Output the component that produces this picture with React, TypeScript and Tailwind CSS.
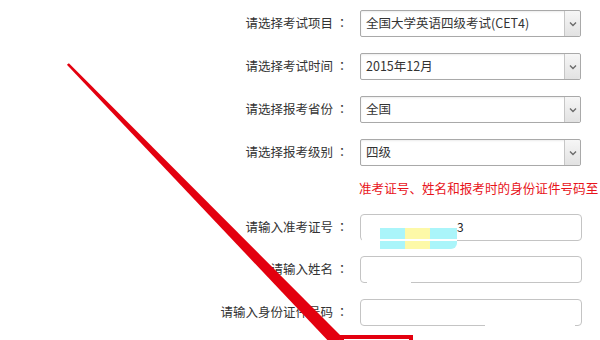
import type { ReactNode } from "react";

const selects = [
  { label: "请选择考试项目", value: "全国大学英语四级考试(CET4)" },
  { label: "请选择考试时间", value: "2015年12月" },
  { label: "请选择报考省份", value: "全国" },
  { label: "请选择报考级别", value: "四级" },
];

function Label({ children }: { children: ReactNode }) {
  return (
    <span className="flex w-[351px] shrink-0 items-center justify-end whitespace-nowrap">
      {children}
      <span className="w-[18px] text-center font-['Noto_Sans_CJK_TC',sans-serif]">
        ：
      </span>
    </span>
  );
}

function Chevron() {
  return (
    <svg width="8" height="6" viewBox="0 0 8 6" className="text-[#6b6b6b]">
      <path
        d="M1 1.5 L4 4.5 L7 1.5"
        fill="none"
        stroke="currentColor"
        strokeWidth="1.4"
      />
    </svg>
  );
}

function Select({ value }: { value: string }) {
  return (
    <div className="ml-[9px] flex h-[27px] w-[221px] items-center rounded-[2px] border border-[#a9a9a9] bg-white shadow-[inset_0_1px_2px_rgba(0,0,0,0.08)]">
      <span className="flex-1 pl-[5px] whitespace-nowrap">{value}</span>
      <span className="flex h-full w-[16px] items-center justify-center rounded-r-[2px] border-l border-[#c6c6c6] bg-gradient-to-b from-[#f6f6f6] to-[#e2e2e2]">
        <Chevron />
      </span>
    </div>
  );
}

function Input({ children }: { children?: ReactNode }) {
  return (
    <div className="relative ml-[9px] h-[27px] w-[222px] rounded-[4px] border border-[#c4c4c4] bg-white">
      {children}
    </div>
  );
}

export default function App() {
  return (
    <div className="relative h-[340px] w-[600px] overflow-hidden bg-white font-['Noto_Sans_CJK_SC',sans-serif] text-[12.5px] leading-none text-[#333]">
      <div className="flex flex-col pt-[10px]">
        {selects.map((s, i) => (
          <div
            key={s.label}
            className={`flex h-[27px] items-center ${i > 0 ? "mt-[16px]" : ""}`}
          >
            <Label>{s.label}</Label>
            <Select value={s.value} />
          </div>
        ))}

        <div className="mt-[14px] flex h-[16px] items-center whitespace-nowrap pl-[359px] text-[12.6px] text-[#e8141b]">
          准考证号、姓名和报考时的身份证件号码至
        </div>

        <div className="mt-[18px] flex h-[27px] items-center">
          <Label>请输入准考证号</Label>
          <Input>
            <div className="absolute left-[19px] top-[13px] flex h-[21px]">
              <span className="w-[25px] bg-[#aaf5fa]" />
              <span className="w-[25px] bg-[#fdf9a8]" />
              <span className="w-[27px] rounded-br-[6px] bg-[#aaf5fa]" />
            </div>
            <span className="absolute left-[96px] top-[6px] text-[12px] text-[#222]">
              3
            </span>
            <span className="absolute -bottom-[1px] left-[1px] h-[2px] w-[95px] bg-white" />
          </Input>
        </div>

        <div className="mt-[15px] flex h-[27px] items-center">
          <Label>请输入姓名</Label>
          <Input>
            <span className="absolute -bottom-[1px] left-[6px] h-[2px] w-[44px] bg-white" />
          </Input>
        </div>

        <div className="mt-[16px] flex h-[27px] items-center">
          <Label>请输入身份证件号码</Label>
          <Input>
            <span className="absolute -bottom-[1px] left-[124px] h-[2px] w-[90px] bg-white" />
          </Input>
        </div>
      </div>

      <svg
        className="pointer-events-none absolute inset-0"
        width="600"
        height="340"
        viewBox="0 0 600 340"
      >
        <polygon
          points="68.9,63.2 66.9,64.8 333,346 342.5,337.5"
          fill="#e3000f"
        />
      </svg>
      <div className="pointer-events-none absolute left-[340px] top-[335px] h-[40px] w-[73px] border-[4px] border-[#e3000f]" />
    </div>
  );
}
